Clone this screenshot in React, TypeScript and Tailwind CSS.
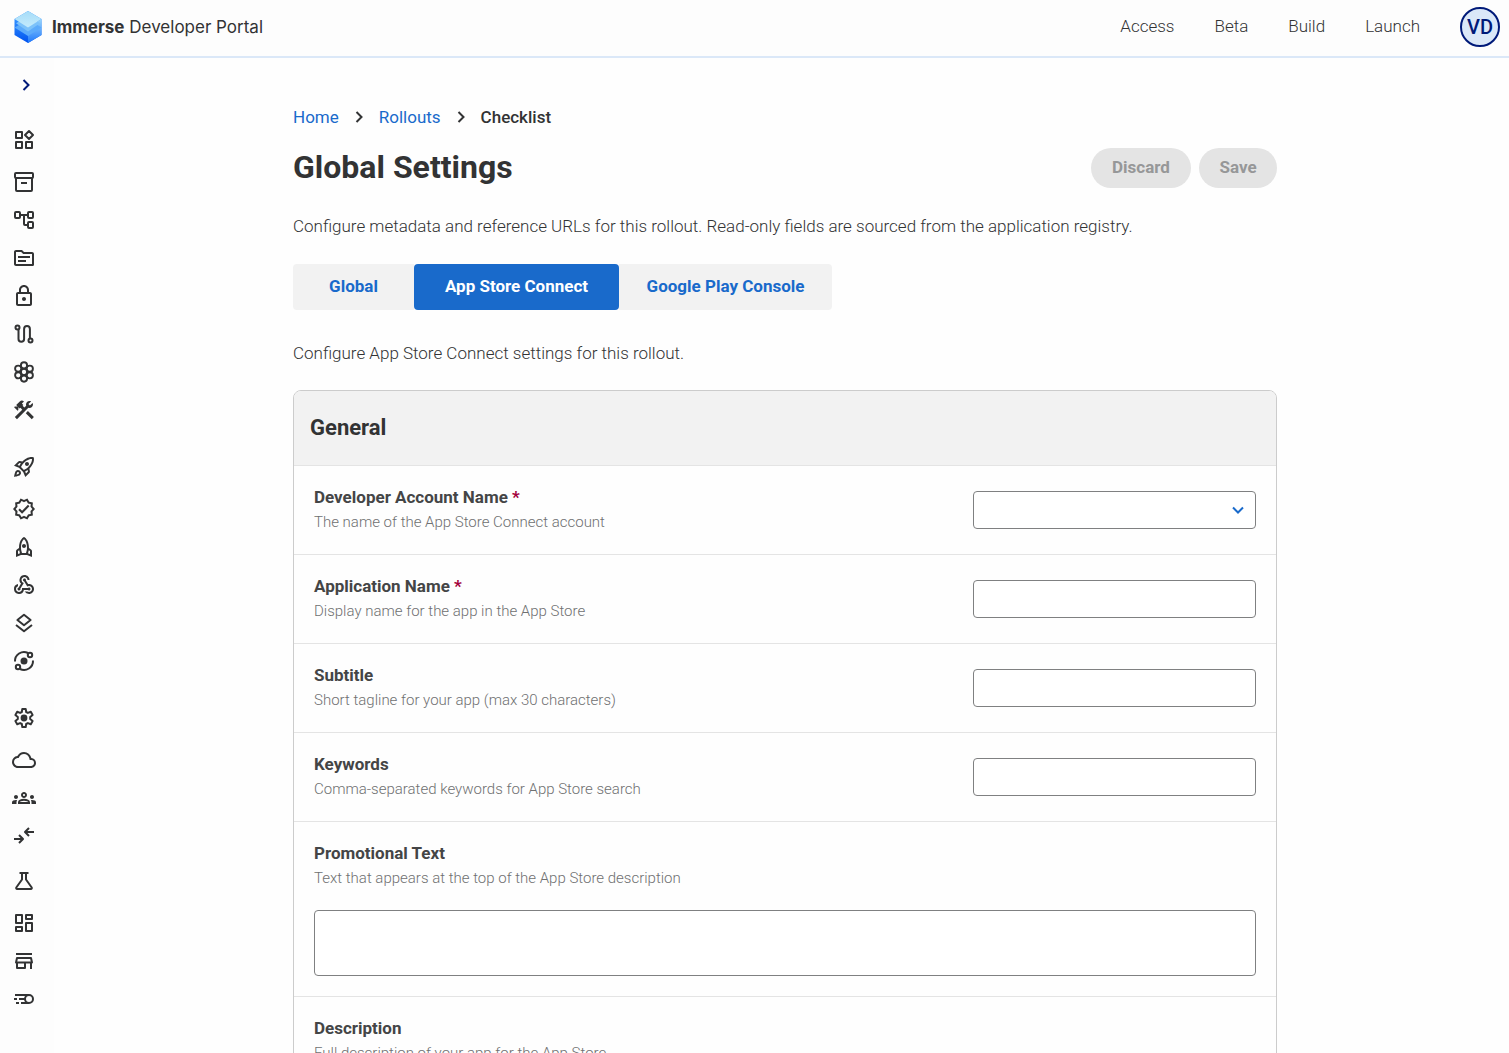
import type { ReactNode } from 'react'
import clsx from 'clsx'
import {
  MdConstruction,
  MdOutlineCloud,
  MdOutlineGroups,
  MdOutlineLock,
  MdOutlineRocket,
  MdOutlineRocketLaunch,
  MdOutlineTopic,
  MdOutlineVerified,
  MdWebhook,
} from 'react-icons/md'

const LineIcon = ({ children }: { children: ReactNode }) => (
  <svg
    viewBox="0 0 24 24"
    className="size-6"
    fill="none"
    stroke="currentColor"
    strokeWidth={2}
    strokeLinejoin="round"
    aria-hidden="true"
  >
    {children}
  </svg>
)

const WidgetsIcon = () => (
  <LineIcon>
    <rect x="4" y="4" width="6" height="6" />
    <rect x="4" y="14" width="6" height="6" />
    <rect x="14" y="14" width="6" height="6" />
    <path d="M17 3 21 7l-4 4L13 7z" />
  </LineIcon>
)

const ArchiveIcon = () => (
  <LineIcon>
    <rect x="3" y="3" width="18" height="5" rx="1" />
    <path d="M4 8v12a1 1 0 0 0 1 1h14a1 1 0 0 0 1-1V8M9 13h6" />
  </LineIcon>
)

const TreeIcon = () => (
  <LineIcon>
    <rect x="3" y="4" width="5" height="6" rx="1" />
    <rect x="16" y="4" width="5" height="6" rx="1" />
    <rect x="16" y="14" width="5" height="6" rx="1" />
    <path d="M8 7h8M12 7v9a1 1 0 0 0 1 1h3" />
  </LineIcon>
)

const RouteIcon = () => (
  <LineIcon>
    <circle cx="5.5" cy="5.5" r="2" />
    <circle cx="18.5" cy="18.5" r="2" />
    <path d="M6.5 7.5V17a2.8 2.8 0 0 0 5.6 0V7a2.9 2.9 0 0 1 5.8 0v9.5" />
  </LineIcon>
)

const HIVE_CELLS = [
  [12, 12],
  [12, 5.4],
  [12, 18.6],
  [6.2, 8.7],
  [17.8, 8.7],
  [6.2, 15.3],
  [17.8, 15.3],
]

const HiveIcon = () => (
  <LineIcon>
    {HIVE_CELLS.map(([cx, cy]) => (
      <circle key={`${cx}-${cy}`} cx={cx} cy={cy} r="3.1" strokeWidth={1.9} />
    ))}
  </LineIcon>
)

const LayersIcon = () => (
  <LineIcon>
    <path d="M12 3.8 18.6 9 12 14.2 5.4 9zM4 14l8 6.2 8-6.2" />
  </LineIcon>
)

const OrbitIcon = () => (
  <LineIcon>
    <circle cx="12" cy="12" r="3.5" fill="currentColor" stroke="none" />
    <circle cx="18" cy="6" r="2.2" />
    <circle cx="6" cy="18" r="2.2" />
    <path d="M3 12.5A9 9 0 0 1 16 4M21 11.5A9 9 0 0 1 8 20" />
  </LineIcon>
)

const SettingsIcon = () => (
  <LineIcon>
    <circle cx="12" cy="12" r="3.4" fill="currentColor" stroke="none" />
    <path d="M10.3 3h3.4l.5 3 1.7.9 2.9-1.1 1.8 3.1-2.4 2v2.2l2.4 2-1.8 3.1-2.9-1.1-1.7.9-.5 3h-3.4l-.5-3-1.7-.9-2.9 1.1-1.8-3.1 2.4-2v-2.2l-2.4-2 1.8-3.1 2.9 1.1 1.7-.9z" />
  </LineIcon>
)

const ArrowsIcon = () => (
  <LineIcon>
    <path d="M22 8h-9M17 4l-4 4 4 4M2 15h9M7 11l4 4-4 4" />
  </LineIcon>
)

const FlaskIcon = () => (
  <LineIcon>
    <path d="M7.500 4h9M10 4v6.500L4.300 18.500A1 1 0 0 0 5.100 20h13.800a1 1 0 0 0 .8-1.500L14 10.500V4" />
  </LineIcon>
)

const DashboardIcon = () => (
  <LineIcon>
    <rect x="4" y="4" width="6" height="8" />
    <rect x="14" y="4" width="6" height="4" />
    <rect x="14" y="12" width="6" height="8" />
    <rect x="4" y="16" width="6" height="4" />
  </LineIcon>
)

const StoreIcon = () => (
  <LineIcon>
    <path d="M4 5h16M5 9h14l1 4.500H4zM5 13.500V19h8v-5.500M19 13.500V20" />
  </LineIcon>
)

const CometIcon = () => (
  <LineIcon>
    <circle cx="17" cy="12" r="4" />
    <path d="M3 8h14M2 12h3M7 12h6M4 16h3M9 16h8" />
  </LineIcon>
)

// first entry of each group is its heading, the rest are its pages
const sections = [
  {
    className: 'mt-[31px]',
    items: [
      { label: 'Applications', icon: <WidgetsIcon /> },
      { label: 'Archive', icon: <ArchiveIcon /> },
      { label: 'Pipelines', icon: <TreeIcon /> },
      { label: 'Files', icon: <MdOutlineTopic className="size-6" /> },
      { label: 'Secrets', icon: <MdOutlineLock className="size-6" /> },
      { label: 'Routes', icon: <RouteIcon /> },
      { label: 'Clusters', icon: <HiveIcon /> },
      { label: 'Tools', icon: <MdConstruction className="size-6" /> },
    ],
  },
  {
    className: 'mt-[33px]',
    items: [
      { label: 'Launch', icon: <MdOutlineRocketLaunch className="size-6" /> },
      { label: 'Approvals', icon: <MdOutlineVerified className="size-6" /> },
      { label: 'Rollouts', icon: <MdOutlineRocket className="size-6" /> },
      { label: 'Webhooks', icon: <MdWebhook className="size-6" /> },
      { label: 'Layers', icon: <LayersIcon /> },
      { label: 'Environments', icon: <OrbitIcon /> },
    ],
  },
  {
    className: 'mt-[33px]',
    items: [
      { label: 'Settings', icon: <SettingsIcon /> },
      { label: 'Cloud', icon: <MdOutlineCloud className="size-6" /> },
      { label: 'Teams', icon: <MdOutlineGroups className="size-6" /> },
      { label: 'Integrations', icon: <ArrowsIcon /> },
    ],
  },
  {
    className: 'mt-[21px]',
    items: [
      { label: 'Labs', icon: <FlaskIcon /> },
      { label: 'Dashboards', icon: <DashboardIcon /> },
      { label: 'Store', icon: <StoreIcon /> },
      { label: 'Performance', icon: <CometIcon /> },
    ],
  },
]

const navLinks = ['Access', 'Beta', 'Build', 'Launch']

const tabs = [
  { label: 'Global', className: 'w-[121px]' },
  { label: 'App Store Connect', className: 'w-[205px]' },
  { label: 'Google Play Console', className: 'w-[213px]' },
]

type Field = {
  id: string
  label: string
  hint: string
  required?: boolean
  kind: 'select' | 'text' | 'area'
}

const fields: Field[] = [
  {
    id: 'account',
    label: 'Developer Account Name',
    hint: 'The name of the App Store Connect account',
    required: true,
    kind: 'select',
  },
  {
    id: 'name',
    label: 'Application Name',
    hint: 'Display name for the app in the App Store',
    required: true,
    kind: 'text',
  },
  {
    id: 'subtitle',
    label: 'Subtitle',
    hint: 'Short tagline for your app (max 30 characters)',
    kind: 'text',
  },
  {
    id: 'keywords',
    label: 'Keywords',
    hint: 'Comma-separated keywords for App Store search',
    kind: 'text',
  },
  {
    id: 'promo',
    label: 'Promotional Text',
    hint: 'Text that appears at the top of the App Store description',
    kind: 'area',
  },
  {
    id: 'description',
    label: 'Description',
    hint: 'Full description of your app for the App Store',
    kind: 'area',
  },
]

const Logo = () => (
  <svg viewBox="0 0 28 32" className="h-8 w-7" aria-hidden="true">
    <defs>
      <linearGradient id="body" x1="0" y1="0" x2="0" y2="1">
        <stop offset="0.3" stopColor="#2f8dff" />
        <stop offset="1" stopColor="#0052ee" />
      </linearGradient>
      <linearGradient id="right" x1="0" y1="0" x2="0" y2="1">
        <stop offset="0" stopColor="#9ad6fb" />
        <stop offset="1" stopColor="#1f78fb" />
      </linearGradient>
      <linearGradient id="top" x1="0" y1="0" x2="0" y2="1">
        <stop offset="0" stopColor="#a6dcf8" />
        <stop offset="1" stopColor="#c4ebfc" />
      </linearGradient>
    </defs>
    <path d="M14 0l13.500 8v16L14 32 .5 24V8z" fill="url(#body)" />
    <path d="M27.500 8v16L14 32V16.500z" fill="url(#right)" />
    <path d="M14 8.500l13.500 8L14 25 .5 16.500z" fill="#5cabfb" />
    <path d="M14 5l12 7.300L14 20.500 2 12.300z" fill="#7cc2fa" />
    <path d="M14 0l13.500 8L14 16.500.5 8z" fill="url(#top)" />
  </svg>
)

const Chevron = ({ className }: { className?: string }) => (
  <svg
    viewBox="0 0 8 12"
    className={clsx('h-3 w-2', className)}
    fill="none"
    stroke="currentColor"
    strokeWidth={2}
    aria-hidden="true"
  >
    <path d="M1.500 1l5 5-5 5" />
  </svg>
)

const Header = () => (
  <header className="flex h-[58px] shrink-0 items-center justify-between border-b-2 border-[#dbe8f8] bg-[#fdfdfd] pr-[9px] pb-0.5 pl-[14px]">
    <a
      href="#"
      className="flex items-center gap-[10px] font-['Inter',sans-serif] text-[17px] leading-7 text-[#323334]"
    >
      <Logo />
      <span>
        <span className="font-bold">Immerse</span> Developer Portal
      </span>
    </a>
    <nav className="flex items-center gap-10">
      {navLinks.map((label) => (
        <a
          key={label}
          href="#"
          className="pb-0.5 text-[17px] leading-6 font-light text-[#323334]"
        >
          {label}
        </a>
      ))}
      <button
        type="button"
        className="flex size-10 items-center justify-center rounded-full border-2 border-[#001a79] bg-[#dbe8f8] text-xl font-medium text-[#001a79]"
      >
        VD
      </button>
    </nav>
  </header>
)

const Sidebar = () => (
  <aside className="flex w-[54px] shrink-0 flex-col bg-[#fdfdfd] pl-3 text-[#323334]">
    <button
      type="button"
      aria-label="Expand menu"
      className="mt-[15px] flex size-6 items-center justify-center self-start pl-1 text-[#001a79]"
    >
      <Chevron />
    </button>
    {sections.map(({ className, items }) => (
      <ul
        key={items[0].label}
        className={clsx('flex flex-col gap-[14px]', className)}
      >
        {items.map(({ label, icon }, index) => (
          <li key={label} className={clsx('h-6', index === 0 && 'mb-1')}>
            <a href="#" aria-label={label} className="block size-6">
              {icon}
            </a>
          </li>
        ))}
      </ul>
    ))}
  </aside>
)

const controlStyle = 'rounded border border-[#7f8081] bg-white text-base'

const FieldRow = ({ id, label, hint, required, kind }: Field) => (
  <div
    className={clsx(
      'flex border-t border-[#e4e4e4] p-5',
      kind === 'area' ? 'flex-col gap-5' : 'items-center justify-between',
    )}
  >
    <div>
      <label
        htmlFor={id}
        className="mb-0.5 block font-bold text-[#444546]"
      >
        {label}
        {required && <span className="text-[#a3003b]"> *</span>}
      </label>
      <p className="text-[15px] leading-6 font-light text-[#6f7071]">{hint}</p>
    </div>
    {kind === 'select' && (
      <div className="relative">
        <select
          id={id}
          className={clsx(controlStyle, 'h-[38px] w-[283px] appearance-none px-3')}
        />
        <Chevron className="pointer-events-none absolute top-[13px] right-[14px] rotate-90 text-[#196acb]" />
      </div>
    )}
    {kind === 'text' && (
      <input
        id={id}
        type="text"
        className={clsx(controlStyle, 'h-[38px] w-[283px] px-3')}
      />
    )}
    {kind === 'area' && (
      <textarea
        id={id}
        className={clsx(controlStyle, 'h-[66px] w-full resize-none px-3 py-2')}
      />
    )}
  </div>
)

const App = () => {
  return (
    <div className="flex h-screen flex-col bg-[#fefefe] font-['Roboto',sans-serif]">
      <Header />
      <div className="flex min-h-0 flex-1">
        <Sidebar />
        <main className="flex-1 overflow-y-auto pl-[7px] text-[17px] leading-[22px] [scrollbar-width:none]">
          <div className="mx-auto max-w-[984px] pt-12 pb-10">
            {/* Breadcrumb */}
            <nav
              aria-label="Breadcrumb"
              className="flex items-center gap-4 text-[#196acb]"
            >
              <a href="#">Home</a>
              <Chevron className="text-[#323334]" />
              <a href="#">Rollouts</a>
              <Chevron className="text-[#323334]" />
              <span className="font-medium text-[#323334]">Checklist</span>
            </nav>

            {/* Title and actions */}
            <div className="mt-5 flex items-center justify-between">
              <h1 className="pb-0.5 text-[32px] leading-9 font-bold text-[#323334]">
                Global Settings
              </h1>
              <div className="flex gap-2 font-bold text-[#969798]">
                <button
                  type="button"
                  disabled
                  className="h-10 w-[100px] rounded-full bg-[#e4e4e4] pb-0.5"
                >
                  Discard
                </button>
                <button
                  type="button"
                  disabled
                  className="h-10 w-[78px] rounded-full bg-[#e4e4e4] pb-0.5"
                >
                  Save
                </button>
              </div>
            </div>

            <p className="mt-[27px] font-light text-[#323334]">
              Configure metadata and reference URLs for this rollout. Read-only
              fields are sourced from the application registry.
            </p>

            {/* Store tabs */}
            <div role="tablist" className="mt-[27px] flex">
              {tabs.map(({ label, className }, index) => (
                <button
                  key={label}
                  type="button"
                  role="tab"
                  aria-selected={index === 1}
                  className={clsx(
                    'h-[46px] pb-0.5 font-bold',
                    className,
                    index === 1
                      ? 'rounded bg-[#196acb] text-white'
                      : 'bg-[#f2f2f2] text-[#196acb]',
                    index === 0 && 'rounded-l',
                    index === 2 && 'rounded-r',
                  )}
                >
                  {label}
                </button>
              ))}
            </div>

            <p className="mt-8 font-light text-[#323334]">
              Configure App Store Connect settings for this rollout.
            </p>

            {/* General card */}
            <section className="mt-[26px] overflow-hidden rounded-lg border border-[#cccccc]">
              <h2 className="flex h-[74px] items-center bg-[#f2f2f2] px-4 text-[22px] font-bold text-[#323334]">
                General
              </h2>
              {fields.map((field) => (
                <FieldRow key={field.id} {...field} />
              ))}
            </section>
          </div>
        </main>
      </div>
    </div>
  )
}

export default App
